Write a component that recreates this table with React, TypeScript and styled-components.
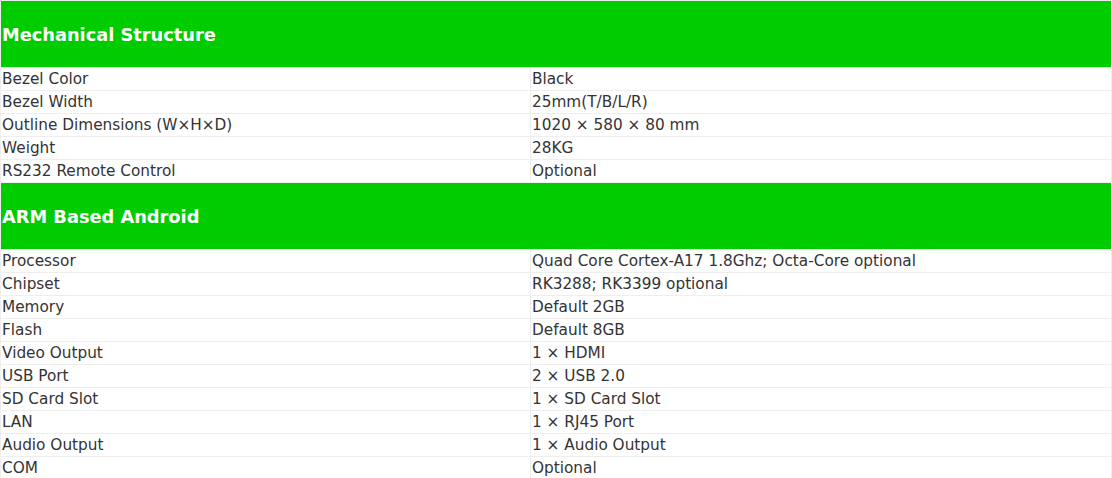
import React from "react";
import styled, { createGlobalStyle } from "styled-components";

const GlobalStyle = createGlobalStyle`
  body {
    margin: 0;
    background: #fff;
    font-family: "DejaVu Sans", Verdana, sans-serif;
  }
`;

const sections = [
  {
    title: "Mechanical Structure",
    rows: [
      ["Bezel Color", "Black"],
      ["Bezel Width", "25mm(T/B/L/R)"],
      ["Outline Dimensions (W×H×D)", "1020 × 580 × 80 mm"],
      ["Weight", "28KG"],
      ["RS232 Remote Control", "Optional"]
    ]
  },
  {
    title: "ARM Based Android",
    rows: [
      ["Processor", "Quad Core Cortex-A17 1.8Ghz; Octa-Core optional"],
      ["Chipset", "RK3288; RK3399 optional"],
      ["Memory", "Default 2GB"],
      ["Flash", "Default 8GB"],
      ["Video Output", "1 × HDMI"],
      ["USB Port", "2 × USB 2.0"],
      ["SD Card Slot", "1 × SD Card Slot"],
      ["LAN", "1 × RJ45 Port"],
      ["Audio Output", "1 × Audio Output"],
      ["COM", "Optional"]
    ]
  }
];

const App = () => {
  return (
    <>
      <GlobalStyle />
      <SpecTable>
        <colgroup>
          <col style={{ width: 530 }} />
          <col />
        </colgroup>
        <tbody>
          {sections.map((section) => (
            <React.Fragment key={section.title}>
              <tr>
                <HeadCell colSpan={2}>{section.title}</HeadCell>
              </tr>
              {section.rows.map(([label, value]) => (
                <tr key={label}>
                  <Cell>{label}</Cell>
                  <Cell>{value}</Cell>
                </tr>
              ))}
            </React.Fragment>
          ))}
        </tbody>
      </SpecTable>
    </>
  );
};

const SpecTable = styled.table`
  width: 100%;
  border-collapse: collapse;
  table-layout: fixed;
`;

const HeadCell = styled.td`
  height: 66px;
  padding: 0 1px;
  background: #00cc00;
  color: #fff;
  font-size: 17.8px;
  font-weight: bold;
  border: 1px solid #eee;
  white-space: nowrap;
`;

const Cell = styled.td`
  height: 21px;
  padding: 1px 0 0 1px;
  color: #333;
  font-size: 15.3px;
  line-height: 21px;
  border: 1px solid #eee;
  white-space: nowrap;
`;

export default App;
